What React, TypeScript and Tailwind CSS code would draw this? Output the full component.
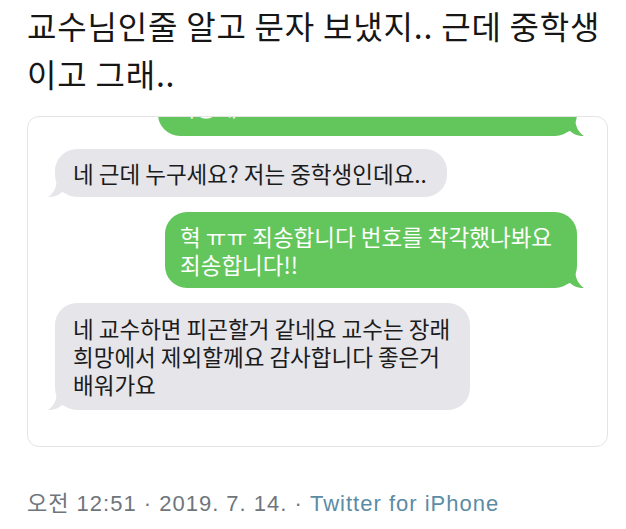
import type { ReactNode } from 'react';

const KR = { fontFamily: '"Noto Sans CJK KR", "Noto Sans", sans-serif' };

const Tail = ({ color, side }: { color: string; side: 'left' | 'right' }) => (
  <svg
    width="18"
    height="20"
    viewBox="0 0 18 20"
    className={
      side === 'left'
        ? 'absolute bottom-0 left-[-7px]'
        : 'absolute bottom-0 right-[-7px] scale-x-[-1]'
    }
  >
    <path d="M9 0 C9 10 6 16 0 20 C6 20 11 18 14 15 L18 16 L18 0 Z" fill={color} />
  </svg>
);

const Gray = ({ children, className }: { children: ReactNode; className: string }) => (
  <div className={`relative self-start rounded-[22px] bg-[#e5e5ea] text-[#1b1b1b] ${className}`}>
    <Tail color="#e5e5ea" side="left" />
    <p className="relative text-[22.5px] leading-[28px] whitespace-nowrap">{children}</p>
  </div>
);

const Green = ({ children, className }: { children: ReactNode; className: string }) => (
  <div className={`relative self-end rounded-[22px] bg-[#63c65c] text-white ${className}`}>
    <Tail color="#63c65c" side="right" />
    <p className="relative text-[22.5px] leading-[28px] whitespace-nowrap">{children}</p>
  </div>
);

export default function App() {
  return (
    <div className="w-[626px] h-[529px] overflow-hidden bg-white px-[27px]" style={KR}>
      {/* tweet text */}
      <h1 className="pt-[1px] pb-[5px] text-[32px] leading-[48px] tracking-[0.8px] whitespace-nowrap font-normal text-[#161616]">
        교수님인줄 알고 문자 보냈지.. 근데 중학생
        <br />
        이고 그래..
      </h1>

      {/* screenshot card */}
      <div className="mt-[14px] h-[331px] w-[581px] rounded-[12px] border border-[#e4e4e4] overflow-hidden flex flex-col pl-[27px] pr-[30px]">
        <Green className="mt-[-41px] h-[60px] w-[419px] flex items-end pl-[17px] pb-[16px]">
          죄송해요 ㅠㅠ
        </Green>

        <Gray className="mt-[13px] w-[392px] px-[18px] py-[10px]">
          네 근데 누구세요? 저는 중학생인데요..
        </Gray>

        <Green className="mt-[15px] w-[412px] pl-[15px] pr-[10px] py-[10px]">
          혁 ㅠㅠ 죄송합니다 번호를 착각했나봐요
          <br />
          죄송합니다!!
        </Green>

        <Gray className="mt-[15px] w-[415px] pl-[18px] pr-[10px] pt-[11px] pb-[12px]">
          네 교수하면 피곤할거 같네요 교수는 장래
          <br />
          희망에서 제외할께요 감사합니다 좋은거
          <br />
          배워가요
        </Gray>
      </div>

      {/* meta line */}
      <p
        className="mt-[40px] text-[22px] leading-[28px] tracking-[1px] whitespace-nowrap text-[#6e757b]"
        style={{ fontFamily: '"Liberation Sans", "Noto Sans CJK KR", sans-serif' }}
      >
        <span style={KR}>오전</span> 12:51 · 2019. 7. 14. ·{' '}
        <span className="text-[#5b8ca6]">Twitter for iPhone</span>
      </p>
    </div>
  );
}
